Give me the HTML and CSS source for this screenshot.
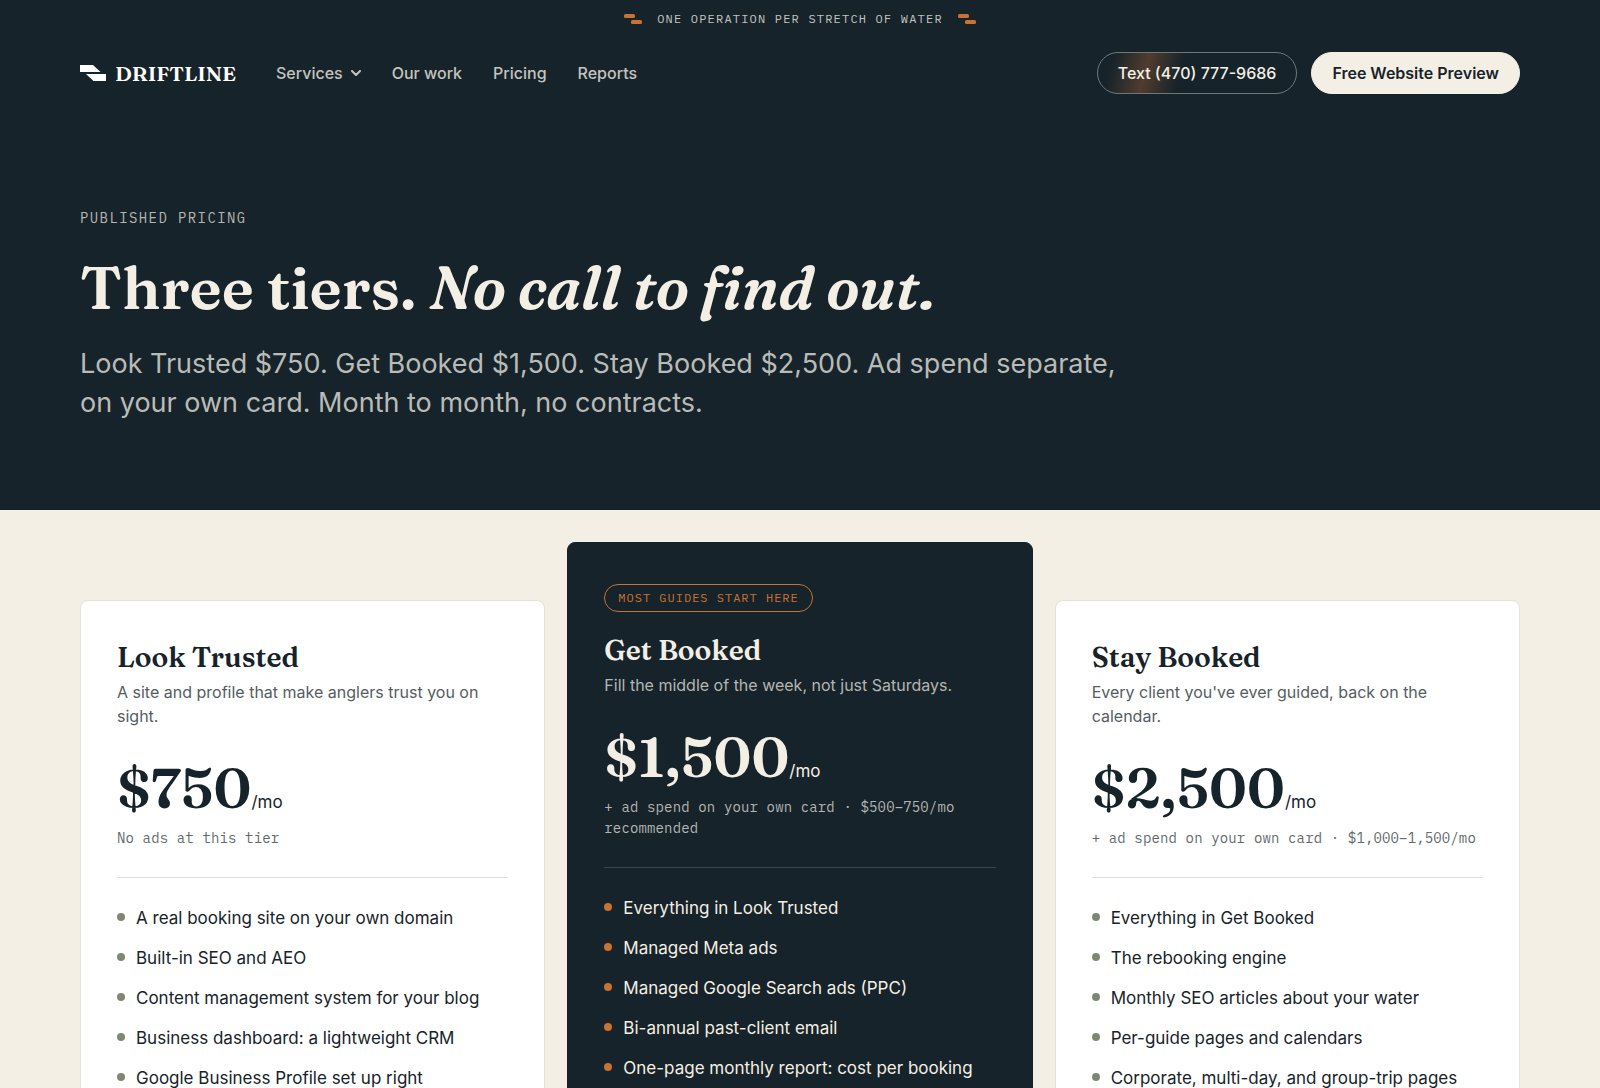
FILE: index.html
```html
<!DOCTYPE html>
<html lang="en">
<head>
    <meta charset="UTF-8">
    <meta name="viewport" content="width=device-width, initial-scale=1.0">
    <title>Pricing | Driftline</title>
    <link rel="stylesheet" href="styles.css">
</head>
<body>
    <header class="site-header">
        <div class="topbar">
            <svg class="topbar-mark" width="18" height="10" viewBox="0 0 18 10" aria-hidden="true">
                <rect x="0" y="0" width="11" height="4" rx="1.5"/>
                <rect x="7" y="6" width="11" height="4" rx="1.5"/>
            </svg>
            <span>ONE OPERATION PER STRETCH OF WATER</span>
            <svg class="topbar-mark" width="18" height="10" viewBox="0 0 18 10" aria-hidden="true">
                <rect x="0" y="0" width="11" height="4" rx="1.5"/>
                <rect x="7" y="6" width="11" height="4" rx="1.5"/>
            </svg>
        </div>

        <div class="container navbar">
            <a class="logo" href="#">
                <svg width="26" height="16" viewBox="0 0 26 16" aria-hidden="true">
                    <path d="M0 0H13L20.500 7H0Z"/>
                    <path d="M6 9H26V16H13.500Z"/>
                </svg>
                <span>DRIFTLINE</span>
            </a>
            <nav class="nav-links">
                <button type="button" class="nav-drop">
                    Services
                    <svg width="10" height="6" viewBox="0 0 10 6" aria-hidden="true">
                        <path d="M1 1L5 5L9 1"/>
                    </svg>
                </button>
                <a href="#">Our work</a>
                <a href="#">Pricing</a>
                <a href="#">Reports</a>
            </nav>
            <div class="nav-actions">
                <a class="btn btn-outline" href="tel:4707779686">Text (470) 777-9686</a>
                <a class="btn btn-solid" href="#">Free Website Preview</a>
            </div>
        </div>
    </header>

    <main>
        <section class="hero">
            <div class="container">
                <p class="eyebrow">PUBLISHED PRICING</p>
                <h1>Three tiers. <em>No call to find out.</em></h1>
                <p class="lead">Look Trusted $750. Get Booked $1,500. Stay Booked $2,500. Ad spend separate, on your own card. Month to month, no contracts.</p>
            </div>
        </section>

        <section class="pricing">
            <div class="container tiers">
                <article class="tier">
                    <h2>Look Trusted</h2>
                    <p class="tagline">A site and profile that make anglers trust you on sight.</p>
                    <p class="price">$750<span>/mo</span></p>
                    <p class="note">No ads at this tier</p>
                    <ul>
                        <li>A real booking site on your own domain</li>
                        <li>Built-in SEO and AEO</li>
                        <li>Content management system for your blog</li>
                        <li>Business dashboard: a lightweight CRM</li>
                        <li>Google Business Profile set up right</li>
                    </ul>
                </article>

                <article class="tier featured">
                    <span class="badge">MOST GUIDES START HERE</span>
                    <h2>Get Booked</h2>
                    <p class="tagline">Fill the middle of the week, not just Saturdays.</p>
                    <p class="price">$1,500<span>/mo</span></p>
                    <p class="note">+ ad spend on your own card · $500–750/mo recommended</p>
                    <ul>
                        <li>Everything in Look Trusted</li>
                        <li>Managed Meta ads</li>
                        <li>Managed Google Search ads (PPC)</li>
                        <li>Bi-annual past-client email</li>
                        <li>One-page monthly report: cost per booking</li>
                    </ul>
                </article>

                <article class="tier">
                    <h2>Stay Booked</h2>
                    <p class="tagline">Every client you've ever guided, back on the calendar.</p>
                    <p class="price">$2,500<span>/mo</span></p>
                    <p class="note">+ ad spend on your own card · $1,000–1,500/mo</p>
                    <ul>
                        <li>Everything in Get Booked</li>
                        <li>The rebooking engine</li>
                        <li>Monthly SEO articles about your water</li>
                        <li>Per-guide pages and calendars</li>
                        <li>Corporate, multi-day, and group-trip pages</li>
                    </ul>
                </article>
            </div>
        </section>
    </main>
</body>
</html>
```

FILE: styles.css
```css
:root {
    --ink: #17232a;
    --cream: #f4efe4;
    --orange: #c87233;
    --moss: #7c8870;
    --serif: "Fraunces", "Liberation Serif", serif;
    --sans: "Inter", sans-serif;
    --mono: "IBM Plex Mono", "Liberation Mono", monospace;
}
* {
    box-sizing: border-box;
}
body {
    margin: 0;
    font-family: var(--sans);
    font-size: 17px;
    line-height: 24px;
    color: var(--ink);
    background-color: var(--cream);
}
h1, h2, p, ul {
    margin: 0;
    padding: 0;
}
a {
    color: inherit;
    text-decoration: none;
}
.container {
    padding: 0 80px;
}

/* header */
.site-header {
    background-color: var(--ink);
    color: var(--cream);
}
.topbar {
    display: flex;
    justify-content: center;
    align-items: center;
    gap: 15px;
    height: 38px;
    font-family: var(--mono);
    font-size: 12px;
    letter-spacing: 0.1em;
    color: #c3c4bf;
}
.topbar-mark {
    fill: var(--orange);
}
.navbar {
    display: flex;
    align-items: center;
    height: 70px;
}
.logo {
    display: flex;
    align-items: center;
    gap: 9px;
    font-family: var(--serif);
    font-size: 21px;
    font-weight: 600;
    color: #fff;
}
.logo svg {
    fill: #fff;
}
.nav-links {
    display: flex;
    align-items: center;
    gap: 31px;
    margin-left: 40px;
    font-size: 16px;
    font-weight: 500;
    color: #c3c4bf;
}
.nav-drop {
    display: flex;
    align-items: center;
    gap: 8px;
    padding: 0;
    border: none;
    background: none;
    font: inherit;
    color: inherit;
    cursor: pointer;
}
.nav-drop svg {
    fill: none;
    stroke: currentColor;
    stroke-width: 2;
    stroke-linecap: round;
    stroke-linejoin: round;
}
.nav-actions {
    display: flex;
    gap: 14px;
    margin-left: auto;
}
.btn {
    padding: 8px 20px;
    border: 1px solid var(--cream);
    border-radius: 21px;
    font-size: 16px;
    font-weight: 500;
}
.btn-outline {
    border-color: #6f7778;
    background-image: linear-gradient(105deg, transparent 8%, rgba(200, 114, 51, 0.32) 25%, transparent 42%);
}
.btn-solid {
    background-color: var(--cream);
    color: var(--ink);
    font-weight: 600;
}

/* hero */
.hero {
    padding: 98px 0 88px;
    background-color: var(--ink);
    color: var(--cream);
}
.eyebrow {
    font-family: var(--mono);
    font-size: 14px;
    letter-spacing: 0.1em;
    color: #b4b6b1;
}
h1 {
    margin: 18px 0;
    font-family: var(--serif);
    font-size: 60px;
    font-weight: 600;
    line-height: 78px;
}
.lead {
    max-width: 1060px;
    font-size: 27px;
    line-height: 39px;
    color: #b9bbb7;
}

/* pricing cards */
.pricing {
    padding: 32px 0 96px;
}
.tiers {
    display: grid;
    grid-template-columns: repeat(3, 1fr);
    align-items: start;
    gap: 22px;
}
.tier {
    margin-top: 58px;
    padding: 41px 36px;
    border: 1px solid #e4e2da;
    border-radius: 8px;
    background-color: #fff;
}
.tier h2 {
    font-family: var(--serif);
    font-size: 28px;
    font-weight: 600;
    line-height: 30px;
}
.tagline {
    margin-top: 8px;
    font-size: 16px;
    color: #555d62;
}
.price {
    margin-top: 30px;
    font-family: var(--serif);
    font-size: 56px;
    font-weight: 600;
    line-height: 60px;
}
.price span {
    font-family: var(--sans);
    font-size: 17px;
    font-weight: normal;
    line-height: 24px;
}
.note {
    margin-top: 10px;
    font-family: var(--mono);
    font-size: 14px;
    line-height: 21px;
    letter-spacing: 0.01em;
    color: #626a6e;
}
.tier ul {
    margin-top: 28px;
    padding-top: 28px;
    border-top: 1px solid #dcdedf;
    list-style: none;
}
.tier li {
    display: flex;
    align-items: flex-start;
    gap: 11px;
    margin-bottom: 16px;
}
.tier li::before {
    content: "";
    flex: none;
    width: 8px;
    height: 8px;
    margin-top: 7px;
    border-radius: 50%;
    background-color: var(--moss);
}

/* highlighted tier */
.featured {
    margin-top: 0;
    border-color: var(--ink);
    background-color: var(--ink);
    color: var(--cream);
}
.badge {
    display: inline-block;
    margin-bottom: 23px;
    padding: 0 13px;
    border: 1px solid var(--orange);
    border-radius: 14px;
    font-family: var(--mono);
    font-size: 12px;
    line-height: 26px;
    letter-spacing: 1px;
    color: var(--orange);
}
.featured .tagline, .featured .note {
    color: #b4b6b1;
}
.featured ul {
    border-top-color: #3b464c;
}
.featured li::before {
    background-color: var(--orange);
}
```
